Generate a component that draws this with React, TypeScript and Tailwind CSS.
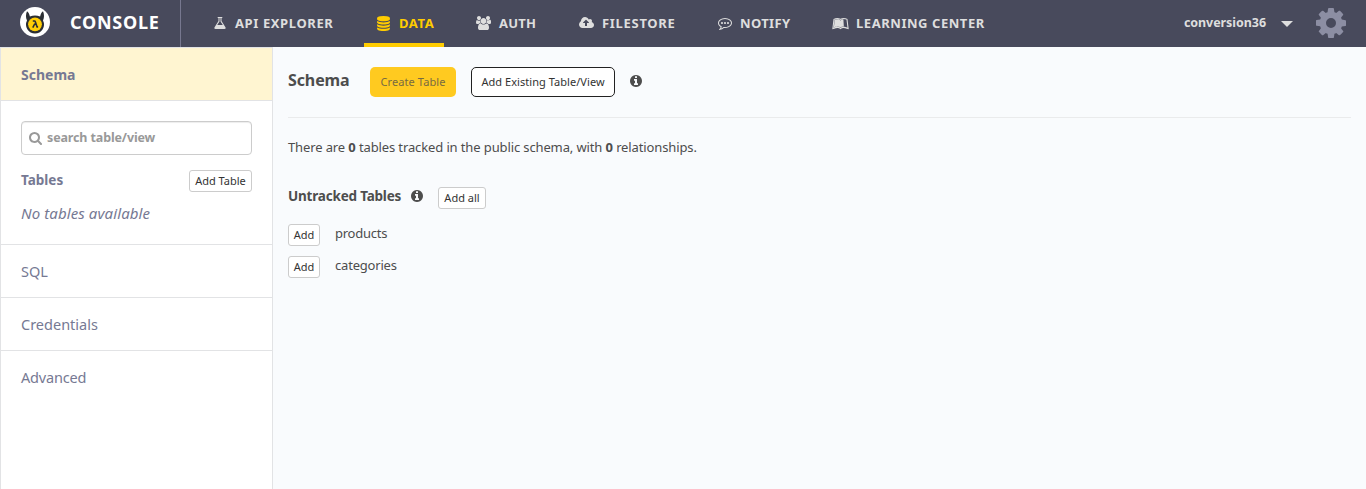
import type { ReactNode } from 'react';
import { FaLeanpub } from 'react-icons/fa';

type GlyphProps = { d: string; className: string; viewBox?: string };

function Glyph({ d, className, viewBox = '0 0 1792 1792' }: GlyphProps) {
  return (
    <svg viewBox={viewBox} className={className} fill="currentColor" aria-hidden="true">
      <path d={d} />
    </svg>
  );
}

const FLASK =
  'M1591 1448q56 89 21.5 152.5t-140.5 63.5h-1152q-106 0-140.5-63.5t21.5-152.5l503-793v-399h-64q-26 0-45-19t-19-45 19-45 45-19h512q26 0 45 19t19 45-19 45-45 19h-64v399zm-779-725l-272 429h712l-272-429-20-31v-436h-128v436z';
const DATABASE =
  'M896 768q237 0 443-43t325-127v170q0 69-103 128t-280 93.5-385 34.5-385-34.5-280-93.5-103-128v-170q119 84 325 127t443 43zm0 768q237 0 443-43t325-127v170q0 69-103 128t-280 93.5-385 34.5-385-34.5-280-93.5-103-128v-170q119 84 325 127t443 43zm0-384q237 0 443-43t325-127v170q0 69-103 128t-280 93.5-385 34.5-385-34.5-280-93.5-103-128v-170q119 84 325 127t443 43zm0-1152q208 0 385 34.5t280 93.5 103 128v128q0 69-103 128t-280 93.5-385 34.5-385-34.5-280-93.5-103-128v-128q0-69 103-128t280-93.5 385-34.5z';
const USERS =
  'M657 896q-162 5-265 128h-134q-82 0-138-40.5t-56-118.5q0-353 124-353 6 0 43.5 21t97.5 42.5 119 21.5q67 0 133-23-5 37-5 66 0 159 90 296zm1071 637q0 120-73 189.5t-194 69.5h-874q-121 0-194-69.5t-73-189.5q0-53 3.5-103.5t14-109 26.5-108.5 43-97.5 62-81 85.5-53.5 111.5-20q10 0 43 21.5t73 48 107 48 135 21.5 135-21.5 107-48 73-48 43-21.5q61 0 111.5 20t85.5 53.5 62 81 43 97.5 26.5 108.5 14 109 3.5 103.5zm-1024-1277q0 106-75 181t-181 75-181-75-75-181 75-181 181-75 181 75 75 181zm704 384q0 159-112.5 271.5t-271.5 112.5-271.5-112.5-112.5-271.5 112.5-271.5 271.5-112.5 271.5 112.5 112.5 271.5zm576 225q0 78-56 118.5t-138 40.5h-134q-103-123-265-128 90-137 90-296 0-29-5-66 66 23 133 23 59 0 119-21.5t97.5-42.5 43.5-21q124 0 124 353zm-128-609q0 106-75 181t-181 75-181-75-75-181 75-181 181-75 181 75 75 181z';
const CLOUD_UPLOAD =
  'M1216 864q0-14-9-23l-352-352q-9-9-23-9t-23 9l-351 351q-10 12-10 24 0 14 9 23t23 9h224v352q0 13 9.5 22.5t22.5 9.5h192q13 0 22.5-9.5t9.5-22.5v-352h224q13 0 22.5-9.5t9.5-22.5zm640 288q0 159-112.5 271.5t-271.5 112.5h-1088q-185 0-316.5-131.5t-131.5-316.5q0-130 70-240t188-165q-2-30-2-43 0-212 150-362t362-150q156 0 285.5 87t188.5 231q71-62 166-62 106 0 181 75t75 181q0 76-41 138 130 31 213.5 135.5t83.5 238.5z';
const COMMENTING =
  'M640 896q0 53-37.5 90.5t-90.5 37.5-90.5-37.5-37.5-90.5 37.5-90.5 90.5-37.5 90.5 37.5 37.5 90.5zm384 0q0 53-37.5 90.5t-90.5 37.5-90.5-37.5-37.5-90.5 37.5-90.5 90.5-37.5 90.5 37.5 37.5 90.5zm384 0q0 53-37.5 90.5t-90.5 37.5-90.5-37.5-37.5-90.5 37.5-90.5 90.5-37.5 90.5 37.5 37.5 90.5zm-512-512q-204 0-381.5 69.5t-282 187.5-104.5 255q0 112 71.5 213.5t201.5 175.5l87 50-27 96q-24 91-70 172 152-63 275-171l43-38 57 6q69 8 130 8 204 0 381.5-69.5t282-187.5 104.5-255-104.5-255-282-187.5-381.5-69.5zm896 512q0 174-120 321.5t-326 233-450 85.5q-70 0-145-8-198 175-460 242-49 14-114 22h-5q-15 0-27-10.5t-16-27.5v-1q-3-4-.5-12t2-10 4.5-9.5l6-9 7-8.5 8-9q7-8 31-34.5t34.5-38 31-39.5 32.5-51 27-59 26-76q-157-89-247.5-220t-90.5-281q0-130 71-248.5t191-204.5 286-136.5 348-50.5 348 50.5 286 136.5 191 204.5 71 248.5z';
const INFO =
  'M1152 1376v-160q0-14-9-23t-23-9h-96v-512q0-14-9-23t-23-9h-320q-14 0-23 9t-9 23v160q0 14 9 23t23 9h96v320h-96q-14 0-23 9t-9 23v160q0 14 9 23t23 9h448q14 0 23-9t9-23zm-128-896v-160q0-14-9-23t-23-9h-192q-14 0-23 9t-9 23v160q0 14 9 23t23 9h192q14 0 23-9t9-23zm640 416q0 209-103 385.5t-279.5 279.5-385.5 103-385.5-103-279.5-279.5-103-385.5 103-385.5 279.5-279.5 385.5-103 385.5 103 279.5 279.5 103 385.5z';
const SEARCH =
  'M1216 832q0-185-131.5-316.5t-316.5-131.5-316.5 131.5-131.5 316.5 131.5 316.5 316.5 131.5 316.5-131.5 131.5-316.5zm512 832q0 52-38 90t-90 38q-54 0-90-38l-343-342q-179 124-399 124-143 0-273.5-55.5t-225-150-150-225-55.5-273.5 55.5-273.5 150-225 225-150 273.5-55.5 273.5 55.5 225 150 150 225 55.5 273.5q0 220-124 399l343 343q37 37 37 90z';
const COG =
  'M1152 896q0-106-75-181t-181-75-181 75-75 181 75 181 181 75 181-75 75-181zm512-109v222q0 12-8 23t-20 13l-185 28q-19 54-39 91 35 50 107 138 10 12 10 25t-9 23q-27 37-99 108t-94 71q-12 0-26-9l-138-108q-44 23-91 38-16 136-29 186-7 28-36 28h-222q-14 0-24.5-8.5t-11.5-21.5l-28-184q-49-16-90-37l-141 107q-10 9-25 9-14 0-25-11-126-114-165-168-7-10-7-23 0-12 8-23 15-21 51-66.5t54-70.5q-27-50-41-99l-183-27q-13-2-21-12.5t-8-23.5v-222q0-12 8-23t19-13l186-28q14-46 39-92-40-57-107-138-10-12-10-24 0-10 9-23 26-36 98.5-107.5t94.5-71.5q13 0 26 10l138 107q44-23 91-38 16-136 29-186 7-28 36-28h222q14 0 24.5 8.5t11.5 21.5l28 184q49 16 90 37l142-107q9-9 24-9 13 0 25 10 129 119 165 170 7 8 7 22 0 12-8 23-15 21-51 66.5t-54 70.5q26 50 41 98l183 28q13 2 21 12.5t8 23.5z';

function Logo() {
  return (
    <svg viewBox="0 0 30 30" className="size-[30px]" aria-hidden="true">
      <circle cx="15" cy="15" r="15" fill="#fff" />
      <path
        d="M7 4.300C8.700 5.500 9.400 7.200 9.900 9.600Q15 7.300 20.100 9.600C20.600 7.200 21.300 5.500 23 4.300C24.300 7.400 24.400 10.500 23 13.500A9 9 0 1 1 7 13.500C5.600 10.500 5.700 7.400 7 4.300z"
        fill="#2b2e33"
      />
      <circle cx="15" cy="17.300" r="6.900" fill="#ffcd06" />
      <path d="M12.800 14h1.700q.6 0 .9.900l1.700 5h1M14.900 16.500l-2.100 4.100" fill="none" stroke="#2b2e33" strokeWidth="1.600" />
    </svg>
  );
}

function Tab({ className, active, icon, children }: { className: string; active?: boolean; icon: ReactNode; children: ReactNode }) {
  return (
    <a
      className={`mr-5 flex h-[47px] shrink-0 items-center whitespace-nowrap border-b-4 pt-[3px] text-[13px] font-bold ${
        active ? 'border-[#ffcc00] text-[#ffcc00]' : 'border-transparent text-[#dedede]'
      } ${className}`}
    >
      {icon}
      <span className="pt-px">{children}</span>
    </a>
  );
}

function SmallButton({ className, children }: { className: string; children: ReactNode }) {
  return (
    <button
      className={`flex h-[22px] items-center justify-center rounded-[3px] border border-[#ccc] bg-white pb-[2px] text-[11px] leading-none text-[#333] ${className}`}
    >
      {children}
    </button>
  );
}

export default function App() {
  return (
    <div className="flex h-[489px] w-[1366px] flex-col overflow-hidden bg-[#f9fbfd] font-['Noto_Sans','Open_Sans',sans-serif] text-[#4d4d4d]">
      <header className="flex h-[47px] shrink-0 bg-[#484a5c]">
        <div className="flex h-full w-[181px] items-center border-r border-[#77788f] pb-[3px] pl-5">
          <Logo />
          <span className="ml-5 text-[18px] font-bold tracking-[0.75px] text-white">CONSOLE</span>
        </div>
        <nav className="flex pl-5">
          <Tab className="w-[143px] pl-[12px] tracking-[0.6px]" icon={<Glyph d={FLASK} className="mr-2 size-[14px]" />}>
            API EXPLORER
          </Tab>
          <Tab className="w-20 pl-[12px] tracking-[0.6px]" active icon={<Glyph d={DATABASE} className="mr-2 size-[15px]" />}>
            DATA
          </Tab>
          <Tab className="w-[83px] pl-[12px] tracking-[0.25px]" icon={<Glyph d={USERS} viewBox="64 0 1920 1792" className="mr-2 h-[14px] w-[15px]" />}>
            AUTH
          </Tab>
          <Tab className="w-[119px] pl-[12px] tracking-[0.7px]" icon={<Glyph d={CLOUD_UPLOAD} viewBox="-64 0 1920 1792" className="mr-2 h-[14px] w-[15px]" />}>
            FILESTORE
          </Tab>
          <Tab className="w-[94px] pl-[12px] tracking-[0.35px]" icon={<Glyph d={COMMENTING} className="mr-2 size-[14px]" />}>
            NOTIFY
          </Tab>
          <Tab className="w-[184px] pl-[12px] tracking-[0.55px]" icon={<FaLeanpub className="mr-[7px] h-[15px] w-[17px]" />}>
            LEARNING CENTER
          </Tab>
        </nav>
        <div className="ml-auto flex items-center pb-px pr-5 text-[#dedede]">
          <span className="text-[12.5px] font-bold tracking-[-0.06px]">conversion36</span>
          <svg viewBox="0 0 12 6" className="ml-[15px] mt-px h-[6px] w-3" fill="currentColor" aria-hidden="true">
            <path d="M0 0h12L6 6z" />
          </svg>
          <Glyph d={COG} viewBox="128 128 1536 1536" className="ml-[23px] size-[30px] text-[#8c8ea3]" />
        </div>
      </header>

      <div className="flex min-h-0 flex-1">
        <aside className="flex w-[273px] shrink-0 flex-col border-x border-[#e2e3e5] bg-white text-[#767993]">
          <div className="flex h-[54px] items-center border-y border-[#e2e3e5] bg-[#fff5d1] pl-5 pt-px text-[14px] font-bold">Schema</div>
          <div className="flex h-36 flex-col border-b border-[#e2e3e5] px-5 pt-5">
            <label className="flex h-[34px] w-[231px] items-center rounded-[4px] border border-[#ccc] pl-[7px] text-[#999] shadow-[inset_0_1px_1px_rgba(0,0,0,0.075)]">
              <Glyph d={SEARCH} viewBox="64 128 1664 1664" className="size-[13px]" />
              <span className="ml-[5px] text-[12.5px] font-bold tracking-[-0.13px]">search table/view</span>
            </label>
            <div className="mt-[15px] flex h-[22px] w-[231px] items-center justify-between">
              <span className="pb-[2px] text-[13.5px] font-bold leading-[20px]">Tables</span>
              <SmallButton className="w-[63px]">Add Table</SmallButton>
            </div>
            <em className="mt-[10px] text-[15px] leading-[22px] tracking-[0.1px]">No tables available</em>
          </div>
          <div className="flex h-[53px] items-center border-b border-[#e2e3e5] pl-5 pt-px text-[14.5px]">SQL</div>
          <div className="flex h-[53px] items-center border-b border-[#e2e3e5] pl-5 pt-px text-[14.5px]">Credentials</div>
          <div className="flex h-[53px] items-center pl-5 pt-px text-[14.5px] tracking-[-0.2px]">Advanced</div>
        </aside>

        <main className="flex flex-1 flex-col pl-[15px] pr-[15px] pt-5">
          <div className="flex h-[51px] items-start border-b border-[#eaebec]">
            <h1 className="w-[82px] text-[16px] font-bold leading-[26px] tracking-[-0.1px]">Schema</h1>
            <button className="flex h-[30px] w-[86px] items-center justify-center rounded-[5px] bg-[#ffca20] text-[11px] tracking-[0.1px] text-[#776a42]">
              Create Table
            </button>
            <button className="ml-[15px] flex h-[30px] w-36 items-center justify-center rounded-[5px] border border-[#222] bg-white text-[11px] tracking-[0.05px] text-[#333]">
              Add Existing Table/View
            </button>
            <Glyph d={INFO} viewBox="128 128 1536 1536" className="ml-[15px] mt-2 size-3" />
          </div>
          <p className="mt-[18px] text-[13px] leading-[22px] tracking-[-0.12px]">
            There are <b>0</b> tables tracked in the public schema, with <b>0</b> relationships.
          </p>
          <div className="mt-[29px] flex h-[22px] items-start">
            <h2 className="w-[123px] text-[13.5px] font-bold leading-[18px] tracking-[-0.2px]">
              Untracked Tables
            </h2>
            <Glyph d={INFO} viewBox="128 128 1536 1536" className="mt-[3px] size-3" />
            <SmallButton className="ml-[15px] w-12">Add all</SmallButton>
          </div>
          <div className="mt-[15px] flex h-[22px] items-start">
            <SmallButton className="w-8">Add</SmallButton>
            <span className="ml-[15px] text-[13px] leading-[18px] tracking-[-0.25px]">products</span>
          </div>
          <div className="mt-[10px] flex h-[22px] items-start">
            <SmallButton className="w-8">Add</SmallButton>
            <span className="ml-[15px] text-[13px] leading-[18px] tracking-[-0.2px]">categories</span>
          </div>
        </main>
      </div>
    </div>
  );
}
